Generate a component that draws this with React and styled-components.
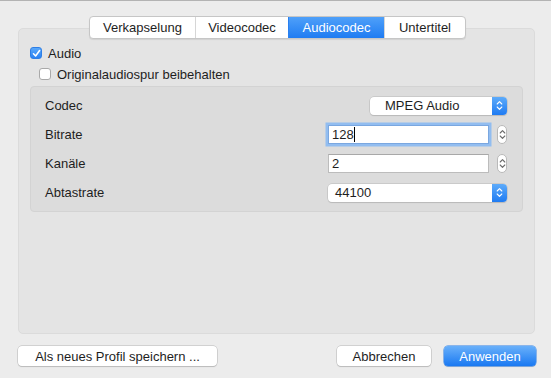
import React from "react";
import styled, { createGlobalStyle, css } from "styled-components";

const GlobalStyle = createGlobalStyle`
  html, body {
    margin: 0;
    padding: 0;
    background: #ececec;
  }
  body {
    font-family: "Liberation Sans", Arial, sans-serif;
    font-size: 13px;
    color: #1e1e1e;
  }
`;

const Window = styled.div`
  width: 551px;
  height: 378px;
  box-sizing: border-box;
  border-top: 1px solid #b3b3b3;
  background: #ececec;
  display: flex;
  flex-direction: column;
  padding: 15px 16px 0 18px;
`;

const TabBar = styled.div`
  align-self: center;
  display: flex;
  height: 21px;
  margin-left: 2px;
  background: #fff;
  border: 1px solid #c6c6c6;
  border-radius: 4px;
  box-shadow: 0 1px 1px rgba(0, 0, 0, 0.08);
  overflow: hidden;
  position: relative;
  z-index: 1;
`;

const Tab = styled.div`
  width: ${({ w }) => w}px;
  display: flex;
  align-items: center;
  justify-content: center;
  box-sizing: border-box;
  border-left: 1px solid #d6d6d6;
  &:first-child {
    border-left: none;
  }
  ${({ active }) =>
    active &&
    css`
      background: linear-gradient(#4fa0f9, #1f7cf2);
      color: #fff;
      border-left-color: #2a80f0;
    `}
`;

const Group = styled.div`
  margin-top: -11px;
  height: 306px;
  box-sizing: border-box;
  background: #e4e4e4;
  border: 1px solid #dbdbdb;
  border-radius: 5px;
  padding: 14px 11px 0 11px;
  display: flex;
  flex-direction: column;
`;

const CheckRow = styled.label`
  display: flex;
  align-items: center;
  gap: 6px;
  height: 20px;
  margin-top: ${({ mt }) => mt || 0}px;
  padding-left: ${({ indent }) => indent || 0}px;
`;

const Box = styled.span`
  width: 12px;
  height: 12px;
  box-sizing: border-box;
  border-radius: 3px;
  display: flex;
  align-items: center;
  justify-content: center;
  ${({ checked }) =>
    checked
      ? css`
          background: linear-gradient(#5aa8fa, #2a82f3);
          border: 1px solid #2f7fe6;
        `
      : css`
          background: #fff;
          border: 1px solid #a9a9a9;
        `}
`;

const Inner = styled.div`
  margin-top: 2px;
  background: #dcdcdc;
  border: 1px solid #d3d3d3;
  border-radius: 4px;
  padding: 4px 15px 4px 14px;
  display: grid;
  grid-template-columns: 1fr 179px;
  grid-auto-rows: 29px;
  align-items: center;
`;

const Label = styled.div`
  line-height: 18px;
`;

const Control = styled.div`
  display: flex;
  align-items: center;
  justify-content: ${({ end }) => (end ? "flex-end" : "flex-start")};
  gap: 8px;
`;

const Popup = styled.div`
  width: ${({ w }) => w}px;
  height: 18px;
  box-sizing: border-box;
  display: flex;
  background: #fff;
  border-radius: 4px;
  box-shadow: 0 0 0 0.5px #b8b8b8, 0 1px 1px rgba(0, 0, 0, 0.15);
  overflow: hidden;
`;

const PopupText = styled.div`
  flex: 1;
  padding-left: ${({ pad }) => pad}px;
  line-height: 18px;
`;

const PopupArrow = styled.div`
  width: 15px;
  background: linear-gradient(#5dabfa, #1f7bf2);
  display: flex;
  align-items: center;
  justify-content: center;
`;

const Field = styled.div`
  width: 161px;
  height: 19px;
  box-sizing: border-box;
  background: #fff;
  border: 1px solid #bcbcbc;
  border-top-color: #a8a8a8;
  padding-left: 3px;
  line-height: 17px;
  display: flex;
  align-items: center;
  ${({ focused }) =>
    focused &&
    css`
      border-color: #7aa7e0;
      box-shadow: 0 0 0 2.5px #92bdf0;
    `}
`;

const Caret = styled.span`
  display: inline-block;
  width: 1px;
  height: 15px;
  background: #000;
`;

const Stepper = styled.div`
  width: 10px;
  height: 19px;
  box-sizing: border-box;
  background: #fff;
  border: 1px solid #b9b9b9;
  border-radius: 5px;
  display: flex;
  align-items: center;
  justify-content: center;
`;

const Footer = styled.div`
  display: flex;
  align-items: center;
  padding-top: 12px;
  margin-right: -1px;
`;

const Button = styled.div`
  height: 20px;
  box-sizing: border-box;
  width: ${({ w }) => w}px;
  margin-left: ${({ ml }) => ml || 0}px;
  display: flex;
  align-items: center;
  justify-content: center;
  border-radius: 4px;
  ${({ primary }) =>
    primary
      ? css`
          background: linear-gradient(#69b0fa, #1a79f2);
          color: #fff;
          box-shadow: 0 0 0 0.5px #2a7fe8, 0 1px 1px rgba(0, 0, 0, 0.15);
        `
      : css`
          background: #fff;
          box-shadow: 0 0 0 0.5px #b5b5b5, 0 1px 1px rgba(0, 0, 0, 0.18);
        `}
`;

const Spacer = styled.div`
  flex: 1;
`;

const Check = () => (
  <svg width="9" height="9" viewBox="0 0 9 9">
    <path d="M1.5 4.8 L3.6 7 L7.6 1.6" fill="none" stroke="#fff" strokeWidth="1.6" strokeLinecap="round" strokeLinejoin="round" />
  </svg>
);

const UpDown = ({ color }) => (
  <svg width="7" height="11" viewBox="0 0 7 11">
    <path d="M1.2 4 L3.5 1.6 L5.8 4 M1.2 7 L3.5 9.4 L5.8 7" fill="none" stroke={color} strokeWidth="1.1" strokeLinecap="round" strokeLinejoin="round" />
  </svg>
);

const tabs = [
  { label: "Verkapselung", w: 105 },
  { label: "Videocodec", w: 93 },
  { label: "Audiocodec", w: 96, active: true },
  { label: "Untertitel", w: 81 },
];

function App() {
  return (
    <>
      <GlobalStyle />
      <Window>
        <TabBar>
          {tabs.map(t => (
            <Tab key={t.label} w={t.w} active={t.active}>
              {t.label}
            </Tab>
          ))}
        </TabBar>
        <Group>
          <CheckRow>
            <Box checked>
              <Check />
            </Box>
            Audio
          </CheckRow>
          <CheckRow indent={9} mt={1}>
            <Box />
            Originalaudiospur beibehalten
          </CheckRow>
          <Inner>
            <Label>Codec</Label>
            <Control end>
              <Popup w={137}>
                <PopupText pad={15}>MPEG Audio</PopupText>
                <PopupArrow>
                  <UpDown color="#fff" />
                </PopupArrow>
              </Popup>
            </Control>

            <Label>Bitrate</Label>
            <Control>
              <Field focused>
                128
                <Caret />
              </Field>
              <Stepper>
                <UpDown color="#6a6a6a" />
              </Stepper>
            </Control>

            <Label>Kanäle</Label>
            <Control>
              <Field>2</Field>
              <Stepper>
                <UpDown color="#6a6a6a" />
              </Stepper>
            </Control>

            <Label>Abtastrate</Label>
            <Control>
              <Popup w={179}>
                <PopupText pad={7}>44100</PopupText>
                <PopupArrow>
                  <UpDown color="#fff" />
                </PopupArrow>
              </Popup>
            </Control>
          </Inner>
        </Group>
        <Footer>
          <Button w={199}>Als neues Profil speichern ...</Button>
          <Spacer />
          <Button w={94}>Abbrechen</Button>
          <Button w={92} ml={13} primary>
            Anwenden
          </Button>
        </Footer>
      </Window>
    </>
  );
}

export default App;
